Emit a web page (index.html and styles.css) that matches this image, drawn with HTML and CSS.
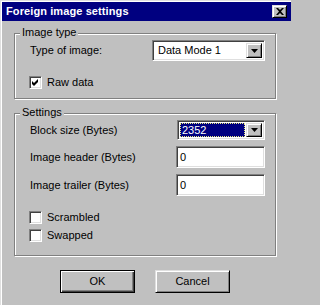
FILE: index.html
```html
<!DOCTYPE html>
<html>
<head>
<meta charset="utf-8">
<link rel="stylesheet" href="styles.css">
</head>
<body>
<div class="window">
  <div class="titlebar">
    <span class="title">Foreign image settings</span>
    <span class="close raised">
      <svg width="8" height="7" viewBox="0 0 8 7"><path d="M0 0H2L4 2L6 0H8L5 3.5L8 7H6L4 5L2 7H0L3 3.5Z" fill="#000"/></svg>
    </span>
  </div>
  <div class="body">
    <div class="group g1">
      <span class="legend">Image type</span>
      <div class="row">
        <span class="label">Type of image:</span>
        <div class="combo combo-wide sunken">
          <span class="combo-text">Data Mode 1</span>
          <span class="drop raised"><svg width="7" height="4" viewBox="0 0 7 4"><path d="M0 0H7L3.5 4Z" fill="#000"/></svg></span>
        </div>
      </div>
      <div class="check first">
        <span class="box sunken"><svg width="7" height="7" viewBox="0 0 7 7"><path d="M0 2L2 4L6 0V3L2 7L0 5Z" fill="#000"/></svg></span>
        <span>Raw data</span>
      </div>
    </div>

    <div class="group g2">
      <span class="legend">Settings</span>
      <div class="row">
        <span class="label">Block size (Bytes)</span>
        <div class="combo combo-narrow sunken">
          <span class="combo-sel"><span class="sel-text">2352</span></span>
          <span class="drop raised"><svg width="7" height="4" viewBox="0 0 7 4"><path d="M0 0H7L3.5 4Z" fill="#000"/></svg></span>
        </div>
      </div>
      <div class="row gap">
        <span class="label">Image header (Bytes)</span>
        <div class="field sunken">0</div>
      </div>
      <div class="row gap">
        <span class="label">Image trailer (Bytes)</span>
        <div class="field sunken">0</div>
      </div>
      <div class="check first">
        <span class="box sunken"></span>
        <span>Scrambled</span>
      </div>
      <div class="check second">
        <span class="box sunken"></span>
        <span>Swapped</span>
      </div>
    </div>

    <div class="buttons">
      <button class="btn btn-default">OK</button>
      <button class="btn raised">Cancel</button>
    </div>
  </div>
</div>
</body>
</html>
```

FILE: styles.css
```css
html, body {
  margin: 0;
  background: #c0c0c0;
}
body {
  font-family: "Liberation Sans", Arial, sans-serif;
  font-size: 11px;
  line-height: 13px;
  color: #000;
}
.window {
  width: 291px;
  height: 305px;
  box-sizing: border-box;
  padding: 2px 0 0 2px;
  background: #c0c0c0;
  box-shadow: inset 1px 1px #dfdfdf, inset 2px 2px #fff;
  overflow: hidden;
}
.titlebar {
  height: 19px;
  background: #000080;
  display: flex;
  align-items: center;
  justify-content: space-between;
  padding: 0 3px 0 4px;
}
.title {
  color: #fff;
  font-weight: bold;
  font-size: 11px;
  letter-spacing: 0.1px;
}
.raised {
  box-sizing: border-box;
  background: #c0c0c0;
  border: 1px solid;
  border-color: #dfdfdf #000 #000 #dfdfdf;
  box-shadow: inset 1px 1px #fff, inset -1px -1px #808080;
}
.sunken {
  box-sizing: border-box;
  background: #fff;
  border: 1px solid;
  border-color: #808080 #fff #fff #808080;
  box-shadow: inset 1px 1px #404040, inset -1px -1px #dfdfdf;
}
.close {
  width: 15px;
  height: 13px;
  display: flex;
  align-items: center;
  justify-content: center;
  margin-right: 1px;
}
.body {
  padding: 12px 0 0 12px;
}
.group {
  position: relative;
  width: 262px;
  box-sizing: border-box;
  border: 1px solid #808080;
  box-shadow: inset 1px 1px #fff, 1px 1px #fff;
  padding: 6px 10px 0 14px;
}
.g1 {
  height: 66px;
}
.g2 {
  height: 143px;
  margin-top: 14px;
}
.legend {
  position: absolute;
  top: -8px;
  left: 5px;
  padding: 0 2px;
  background: #c0c0c0;
  line-height: 13px;
}
.row {
  display: flex;
  align-items: center;
  justify-content: space-between;
}
.row.gap {
  margin-top: 6px;
}
.label {
  padding-left: 1px;
}
.combo {
  display: flex;
  align-items: stretch;
  padding: 2px;
}
.combo-wide {
  width: 113px;
  height: 21px;
}
.combo-narrow {
  width: 88px;
  height: 20px;
}
.combo-text {
  flex: 1;
  padding-left: 3px;
  display: flex;
  align-items: center;
}
.combo-sel {
  flex: 1;
  margin: 0 1px 0 0;
  background: #000080;
  outline: 1px dotted #e8e880;
  outline-offset: -1px;
  display: flex;
  align-items: center;
}
.sel-text {
  color: #fff;
  padding-left: 2px;
}
.drop {
  width: 16px;
  display: flex;
  align-items: center;
  justify-content: center;
}
.field {
  width: 89px;
  height: 22px;
  padding: 0 3px;
  display: flex;
  align-items: center;
}
.check {
  display: flex;
  align-items: center;
  gap: 5px;
  height: 13px;
}
.check.first {
  margin-top: 15px;
}
.check.second {
  margin-top: 5px;
}
.box {
  width: 13px;
  height: 13px;
  display: flex;
  align-items: center;
  justify-content: center;
}
.buttons {
  width: 262px;
  display: flex;
  justify-content: center;
  gap: 20px;
  margin-top: 14px;
}
.btn {
  width: 75px;
  height: 23px;
  font: inherit;
  color: #000;
  padding: 0;
  margin: 0;
  background: #c0c0c0;
}
.btn-default {
  box-sizing: border-box;
  border: 1px solid #000;
  box-shadow: inset 1px 1px #fff, inset -1px -1px #404040, inset -2px -2px #808080;
}
```
